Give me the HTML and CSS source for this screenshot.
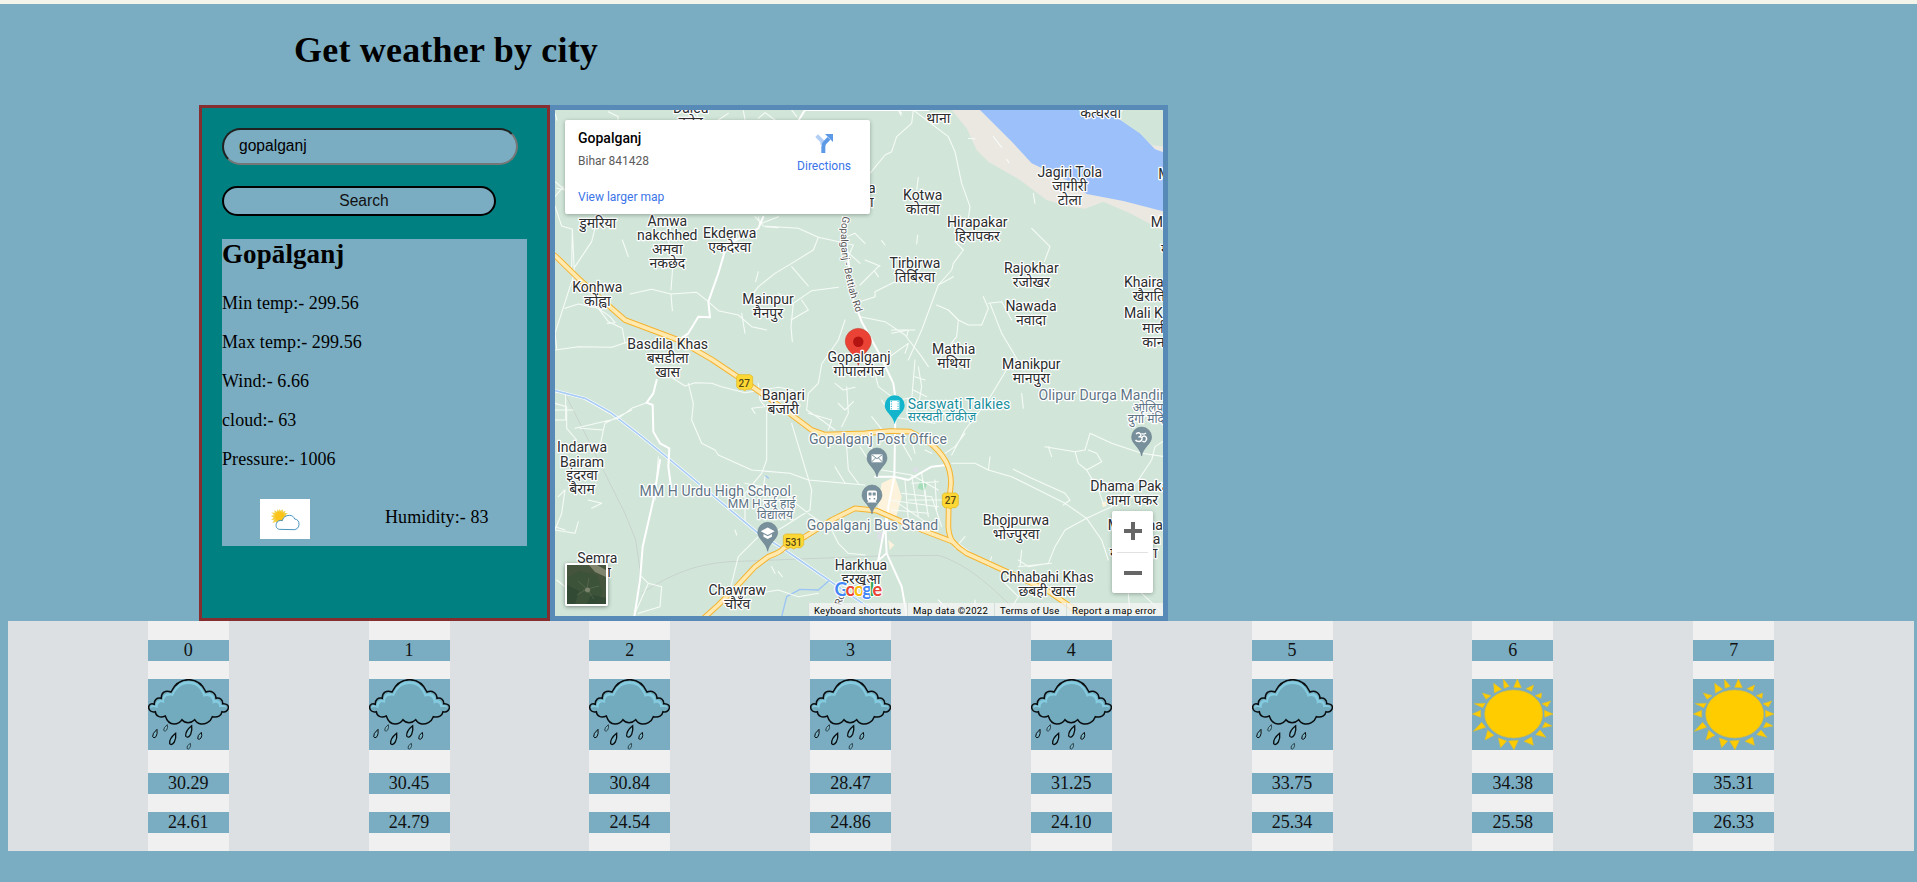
FILE: index.html
```html
<!DOCTYPE html>
<html lang="en">
<head>
<meta charset="utf-8">
<title>Get weather by city</title>
<link rel="stylesheet" href="styles.css">
</head>
<body>
<svg class="defs" width="0" height="0" aria-hidden="true">
  <symbol id="rain" viewBox="444 207 243 213" preserveAspectRatio="none">
    <path d="M513 246C526 218 545 209 566 209S606 219 618 246C633 240 648 248 648 265C659 262 669 269 668 281C681 280 688 288 684 297C681 305 674 307 666 305C664 317 654 324 637 320C631 337 615 343 603 342C595 341 589 338 584 329C572 341 556 341 546 329C541 337 532 342 522 342C508 342 501 334 496 318C480 325 467 318 466 305C454 308 446 301 446 292C446 282 455 279 463 283C462 269 472 261 484 265C483 248 496 239 513 246Z" fill="#72abbd" stroke="#0a0d0f" stroke-width="4.500"/>
    <path d="M451 294C450 286 457 283 466 289C465 276 475 266 488 271C487 253 500 246 516 251C530 222 548 214 566 214S602 224 615 252C630 246 643 253 644 270C655 268 663 275 663 285C671 284 679 287 679 293C670 290 665 292 658 292C658 278 648 275 638 281C640 262 625 253 611 260C602 232 586 222 566 222S529 233 519 258C500 253 490 262 493 279C479 273 472 280 473 294C463 290 456 290 451 294Z" fill="#85cbe0"/>
    <g fill="#7ab4c6" stroke="#0a0d0f" stroke-width="3">
      <path d="M471 358Q456 371 458 380Q461 387 468 380Q473 372 471 358Z"/>
      <path d="M502 344Q490 353 491 361Q495 367 500 360Q504 354 502 344Z" stroke-width="2"/>
      <path d="M527 370Q507 386 509 401Q514 408 523 396Q529 385 527 370Z" stroke-width="4"/>
      <path d="M575 347Q556 362 557 378Q563 387 572 373Q577 362 575 347Z" stroke-width="4"/>
      <path d="M604 367Q592 376 593 386Q597 391 603 384Q607 377 604 367Z"/>
      <path d="M571 400Q559 407 561 415Q564 421 570 413Q573 407 571 400Z" stroke-width="2"/>
    </g>
  </symbol>
  <symbol id="sun" viewBox="96 207 243 213" preserveAspectRatio="none">
    <g fill="#fc0" stroke="#d8bd35" stroke-width="2">
      <ellipse cx="221" cy="312" rx="87" ry="72"/>
      <path d="M161 220L185 238L163 249ZM190 208L208 229L192 235ZM232 207L244 233L221 232ZM281 225L275 244L258 236ZM305 249L303 265L285 257ZM332 273L322 291L306 281ZM313 301L339 312L314 322ZM315 337L336 348L307 353ZM300 360L318 382L287 374ZM275 381L280 406L252 394ZM206 393L235 391L222 419ZM175 384L200 393L182 413ZM143 361L162 376L135 390ZM125 337L137 352L100 364ZM122 301V322L97 312ZM103 281L136 280L128 293ZM127 249L153 257L138 268Z"/>
    </g>
  </symbol>
</svg>

<h1 class="title">Get weather by city</h1>

<main class="panels">
  <section class="lookup">
    <input class="city-input" type="text" value="gopalganj">
    <button class="search-btn">Search</button>
    <div class="report">
      <h2>Gopālganj</h2>
      <p>Min temp:- 299.56</p>
      <p>Max temp:- 299.56</p>
      <p>Wind:- 6.66</p>
      <p>cloud:- 63</p>
      <p>Pressure:- 1006</p>
      <div class="sky">
        <svg class="sky-icon" viewBox="210 537 150 120">
          <path d="M269 566L272 573L278 568L279 575L287 572L284 579L294 580L287 585L293 592L287 598L284 604L262 612L258 605L247 609L253 599L243 600L251 593L243 588L252 585L244 577L254 579L253 571L261 575L262 568L267 573Z" fill="#f3cf45"/>
          <circle cx="269" cy="589" r="14" fill="#fcc419"/>
          <path d="M268 628C259 626 257 619 259 611C261 603 269 600 277 602C279 591 289 586 298 586S311 590 314 597C323 598 328 605 327 614C326 624 320 628 313 629Z" fill="#fff" stroke="#2c83b5" stroke-width="2.600"/>
        </svg>
        <span class="humidity">Humidity:- 83</span>
      </div>
    </div>
  </section>

  <section class="map">
    <svg class="map-canvas" viewBox="555 110 608 506">
      <rect x="555" y="110" width="608" height="506" fill="#d1e6d9"/>
      <g transform="translate(545 100) scale(.333333)" fill="none" stroke-linejoin="round" stroke-linecap="round">
        <path d="M1220 30L1265 85L1295 150L1330 185L1425 240L1505 300L1565 318L1620 326L1675 305L1755 340L1860 395V140L1815 128L1700 30Z" fill="#ebe8e2"/>
        <path d="M1305 30L1405 130L1460 190L1565 240L1625 282L1735 303L1860 335V158L1830 148L1785 100L1705 45L1680 30Z" fill="#9cc0fa"/>
        <path d="M1680 28L1705 45L1785 100L1822 136L1860 140V28Z" fill="#d1e6d9"/>
        <path d="M1010 1150L1050 1130L1070 1190L1060 1230L1050 1260L995 1240ZM1030 1320L1048 1335L1034 1350ZM1670 1208L1682 1204L1684 1218L1674 1222Z" fill="#fdf3dc"/>
        <path d="M1125 1142L1146 1151L1138 1172L1118 1165Z" fill="#a5dcb9"/>
        <path d="M1105 1102h14v14h-14zM995 1295l20 2l3 20l-20 2z" fill="#dcdfe5"/>
        <g stroke="#c8d3ce" stroke-width="3">
          <path d="M62 885L100 960L180 1120L240 1240L272 1320L285 1410L280 1480"/>
          <path d="M290 1480C380 1420 460 1390 560 1385L1000 1368L1180 1366C1260 1390 1330 1450 1410 1530"/>
        </g>
        <path d="M30 872L120 895L200 940L290 1010L400 1100L640 1300L720 1350L850 1440L960 1515L1020 1550" stroke="#fff" stroke-width="9"/>
        <path d="M30 872L120 895L200 940L290 1010L400 1100L640 1300L720 1350L850 1440L960 1515L1020 1550" stroke="#a9cdf5" stroke-width="5"/>
        <path d="M710 1550L725 1490L765 1468L820 1470L850 1444M662 1128L670 1134" stroke="#9cc4f5" stroke-width="4"/>

        <g stroke="#f7fbf8" stroke-width="3.200">
          <path d="M190 35L220 50L215 90M450 32L470 75M520 60L550 40M595 32L600 58M640 55L660 38L690 60M740 30L755 50M30 40L36 60M30 245L60 270L35 265M30 290L55 260"/>
          <path d="M30 318L50 378L82 388L80 500M82 388L88 520M90 500L140 425L150 385M88 520L30 700L35 745"/>
          <path d="M355 350L378 375L370 420L384 490L378 570M232 420L250 470M255 582L320 568L378 582L382 632M378 582L455 577L490 605"/>
          <path d="M60 625L100 612L160 625L195 650L210 668L186 670M160 625L190 665M190 665L232 685L240 730M30 750L100 740L200 742L250 725"/>
          <path d="M630 350L655 378L760 385L820 412L805 450L740 490L690 520L640 560L610 600M660 380L700 383M640 350L645 375M700 350L650 370M740 500L790 558M640 515L632 545"/>
          <path d="M490 605L520 632L580 645L620 680L665 690M745 610L738 680L742 725M738 660L790 630L770 600M700 580L745 610L800 572L880 562M590 640L600 700"/>
          <path d="M820 412L925 435L910 470M905 410L930 400L960 430M880 430L945 490M1105 30L1100 70L1055 110L1040 155L1020 165L975 220M1070 40L1060 30L1068 46"/>
          <path d="M1105 30L1210 110L1230 155L1250 250L1275 320L1270 355L1230 425L1255 450L1240 470L1225 490L1220 510L1180 555L1130 690L1090 780"/>
          <path d="M1180 555L1225 530M1175 615L1210 630L1240 660L1270 675L1310 675L1330 625L1315 590M1240 660L1235 710L1180 780M1330 610L1370 605L1400 660M1335 610L1370 700L1400 750L1420 785"/>
          <path d="M1460 385L1515 440L1498 485M1120 232L1115 270M1010 422L1020 435M1345 110L1370 142M1465 280L1470 310M1118 405L1115 432M1385 178L1392 188M1270 115L1290 117"/>
          <path d="M945 555L1000 500L1005 498L960 480M945 605L990 590L990 575L1050 545L1100 535M990 515L1000 530M945 650L1020 665L1080 705L1130 770L1150 800M1040 690L1110 690M1040 700L1090 690L1085 710M1020 780L1090 730L1080 760"/>
          <path d="M30 910L65 920L65 985L95 1020M30 930H85M30 960H65M62 885V960M90 985L220 955L260 925L305 908M105 985L175 990L165 1040M175 990L180 970L260 930"/>
          <path d="M330 800L420 858L450 848L500 850L530 860L600 878L700 862L745 870M430 850L445 910L440 960L470 1030L510 1050L520 1065L620 1110L735 1120L790 1140L960 1155"/>
          <path d="M640 850L645 900L660 920L620 925L630 940M665 930V1080L650 1120L600 1180L600 1260M740 970L770 1070L800 1170L795 1230L700 1290M660 1130L655 1160L735 1190M600 1150L700 1170L790 1240L860 1290L880 1330L910 1360L960 1365"/>
          <path d="M900 660L880 720L830 792L820 850L790 880L785 930L830 960L870 990M790 940L860 960L850 990M905 860L910 940L890 980M980 780L1000 860L1040 890M905 1040L910 1110L940 1150M870 1100L900 1150M880 910L900 930L925 905M870 850L895 870L930 862"/>
          <path d="M40 1190L60 1170L50 1240L30 1290L90 1300L100 1265M30 1280L60 1290M130 1200L170 1210L140 1225M340 1070L330 1200M35 1440L60 1460L80 1500M270 1540L310 1450L350 1460L345 1520L280 1540M310 1450L290 1430"/>
          <path d="M540 1510L560 1450L580 1370L620 1330L640 1310M640 1480L700 1470L760 1490L820 1480M680 1400L690 1420M700 1415L712 1430M570 1290L575 1305"/>
          <path d="M1010 900L1040 950L1100 960L1170 970M1120 800L1130 860L1120 920M1220 1065L1260 990L1330 900L1390 800L1420 785M1430 880L1435 925M1200 1060L1230 1040L1260 1000M1110 780L1100 900L1120 960M1110 830L1140 840M1105 870L1145 890M1060 900L1090 895L1085 940"/>
          <path d="M1220 1090L1290 1090L1330 1110L1400 1130L1440 1150L1560 1210L1625 1255L1700 1220L1780 1140L1820 1080L1830 1040L1860 1020M1330 1110L1335 1070M1405 1108L1460 1135L1560 1180L1575 1200L1555 1215"/>
          <path d="M1500 1040L1590 1055L1620 1050L1635 1000L1700 1030L1790 1060L1860 1070M1590 1055L1600 1090L1625 1110L1670 1085L1655 1060L1630 1050M1625 1110L1660 1170L1675 1210M1520 1070L1510 1040"/>
          <path d="M1625 1255L1560 1290L1530 1340L1510 1390L1450 1400L1420 1380M1625 1255L1670 1320L1690 1380M1420 1400L1520 1390M1430 1350L1425 1400M1390 1540L1420 1490L1380 1450M1790 1480L1860 1545M1750 1480L1755 1540"/>
          <path d="M1010 1110L1100 1125L1180 1170M1070 1180L1160 1190M1030 1200L1180 1220M1100 1125L1120 1250M1130 1120L1150 1250M1160 1190L1190 1280M1040 1230L1150 1240M1080 1140L1090 1260M970 1010L1000 1110M945 1040L970 1080M980 950L1020 1000M1060 1010L1100 1080"/>
          <path d="M1090 1200L1200 1200M1100 1150L1180 1145M1140 1170L1145 1220M1170 1140L1175 1230M1060 1210L1140 1265M950 1010L1000 1070L1000 1120M1240 1330L1280 1360M1230 1345L1260 1310M1340 1370L1330 1400M1180 1500L1210 1530M1290 1500V1540M1095 1000L1110 1060M1140 1050L1160 1060"/>
        </g>
        <g stroke="#fff" stroke-width="6">
          <path d="M655 350L640 385L545 435L520 520L490 605L495 652L460 650L430 700L395 725M1150 30L780 30L760 62M335 840L325 880L305 908L323 915L325 995L345 1030L373 1045L370 1100L378 1160M345 1080L325 1200L293 1340L285 1440L268 1550"/>
          <path d="M893 350L910 480L925 600L950 665L1005 765L1045 850L1052 900L1050 1000L1048 1130L1030 1220L1022 1300L1025 1360L1070 1460L1085 1545M1025 1360L990 1390M1048 1130L1090 1140L1160 1100L1205 1095M990 1130L1048 1130M1025 1250L1000 1380"/>
        </g>
        <g stroke="#f5b32e" stroke-width="17">
          <path d="M30 467L100 535L200 625L240 660L400 720L500 778L600 845L700 915L800 990L840 1004L960 1000L1035 993L1095 995L1145 1020C1200 1065 1218 1100 1218 1150L1211 1220L1210 1280Q1212 1310 1223 1325Q1240 1345 1265 1360L1385 1415L1505 1470L1605 1540L1625 1560"/>
          <path d="M470 1560L520 1515L570 1465L630 1400L670 1370Q710 1355 715 1345L780 1310L860 1260L930 1225L995 1232L1105 1280L1223 1325"/>
        </g>
        <g stroke="#ffe9ae" stroke-width="11">
          <path d="M30 467L100 535L200 625L240 660L400 720L500 778L600 845L700 915L800 990L840 1004L960 1000L1035 993L1095 995L1145 1020C1200 1065 1218 1100 1218 1150L1211 1220L1210 1280Q1212 1310 1223 1325Q1240 1345 1265 1360L1385 1415L1505 1470L1605 1540L1625 1560"/>
          <path d="M470 1560L520 1515L570 1465L630 1400L670 1370Q710 1355 715 1345L780 1310L860 1260L930 1225L995 1232L1105 1280L1223 1325"/>
        </g>
        <g fill="#fdd835" stroke="#e3b51c" stroke-width="2">
          <path d="M582 824h34l7 6v30l-7 8h-10l-7 4l-7-4h-10l-7-8v-30z"/>
          <path d="M1199 1179h34l7 6v30l-7 8h-10l-7 4l-7-4h-10l-7-8v-30z"/>
          <path d="M723 1302h45l8 6v26l-8 9h-14l-8 4l-8-4h-15l-8-9v-26z"/>
        </g>
      </g>
      <g class="shield">
        <text x="744.300" y="386.500">27</text><text x="950.500" y="504.400">27</text><text x="793.500" y="545.600">531</text>
      </g>

      <!-- points of interest -->
      <g fill="#78909c" stroke="#607987" stroke-width=".5">
        <path id="pin" d="M767.700 522.300a10 10 0 0 1 10 10c0 7-8.500 10-10 19c-1.500-9-10-12-10-19a10 10 0 0 1 10-10z"/>
        <use href="#pin" x="109.300" y="-74.300"/>
        <use href="#pin" x="104.300" y="-37.300"/>
        <use href="#pin" x="373.900" y="-95.300"/>
      </g>
      <path d="M894.700 395.300a10 10 0 0 1 10 10c0 7-8.500 10-10 19c-1.500-9-10-12-10-19a10 10 0 0 1 10-10z" fill="#12b5cb"/>
      <path d="M767.700 527.500l7 3.700l-7 3.700l-7-3.700zM763.500 534l4.200 2.200l4.200-2.200v2.700l-4.200 2.300l-4.200-2.300z" fill="#fff"/>
      <path d="M871.500 454.300h11v8h-11z" fill="#fff"/><path d="M871.500 454.500l5.500 4.200l5.500-4.200M871.500 462l4-4M882.500 462l-4-4" stroke="#78909c" fill="none"/>
      <path d="M869 490.500h6q2 0 2 2v6q0 2-1.500 2.500l1.500 1.500h-10l1.500-1.500q-1.500-.5-1.500-2.500v-6q0-2 2-2z" fill="#fff"/><path d="M868.500 492.500h3v3h-3zM872.700 492.500h3v3h-3zM869 498h1.500v1.500h-1.500zM873.700 498h1.500v1.500h-1.500z" fill="#78909c"/>
      <path d="M890 400.500h9.400v9.500h-9.400z" fill="#fff"/><path d="M891.300 401v9M898.100 401v9" stroke="#12b5cb" stroke-dasharray="1.200 1.200"/>
      <path d="M1136 434q3-2.500 4.500 0t-2 3q4-.5 3.500 2t-3 2.500t-3.500-1.500M1141.500 438q2-3 4-1.500t.5 4t-3.500 .5M1141.500 433.500q2 1.500 4.500-.5" fill="none" stroke="#fff" stroke-width="1.400"/>
      <path d="M858.300 328.400a13 13 0 0 1 13 13c0 8.500-10.500 13-13 24c-2.500-11-13-15.500-13-24a13 13 0 0 1 13-13z" fill="#ea4335" stroke="#c5392d" stroke-width=".6"/>
      <circle cx="858.300" cy="341.700" r="5.200" fill="#b31412"/>

      <g class="place">
        <text x="690.700" y="113">Daleu</text><text x="690.700" y="127">दलेउ</text>
        <text x="938.300" y="122.700">थाना</text><text x="1100.700" y="117.500">कत्घरवा</text>
        <text x="597.700" y="228">डुमरिया</text>
        <text x="667.300" y="225.700">Amwa</text><text x="667.300" y="239.700">nakchhed</text><text x="667.300" y="253.500">अमवा</text><text x="667.300" y="267.700">नकछेद</text>
        <text x="729.700" y="237.700">Ekderwa</text><text x="729.700" y="251.700">एकदेरवा</text>
        <text x="597.300" y="291.700">Konhwa</text><text x="597.300" y="305.700">कोंह्वा</text>
        <text x="768" y="304">Mainpur</text><text x="768" y="318">मैनपुर</text>
        <text x="667.700" y="349">Basdila Khas</text><text x="667.700" y="363">बसडीला</text><text x="667.700" y="377">खास</text>
        <text x="871.700" y="193">a</text><text x="868" y="207">वा</text>
        <text x="922.700" y="200">Kotwa</text><text x="922.700" y="213.700">कोतवा</text>
        <text x="977.300" y="227">Hirapakar</text><text x="977.300" y="241">हिरापकर</text>
        <text x="915" y="268">Tirbirwa</text><text x="915" y="282">तिर्बिरवा</text>
        <text x="1031.300" y="273">Rajokhar</text><text x="1031.300" y="287">रजोखर</text>
        <text x="1031" y="311.300">Nawada</text><text x="1031" y="325.300">नवादा</text>
        <text x="953.700" y="354">Mathia</text><text x="953.700" y="368">मथिया</text>
        <text x="1069.700" y="176.700">Jagiri Tola</text><text x="1069.700" y="190.700">जागीरी</text><text x="1069.700" y="204.700">टोला</text>
        <text x="859" y="361.700">Gopalganj</text><text x="859" y="375.700">गोपालगंज</text>
        <text x="783.300" y="399.700">Banjari</text><text x="783.300" y="413.500">बंजारी</text>
        <text x="1031.300" y="369.300">Manikpur</text><text x="1031.300" y="383.300">मानपुरा</text>
        <text x="582" y="452.300">Indarwa</text><text x="582" y="466.700">Bairam</text><text x="582" y="480.300">इंदरवा</text><text x="582" y="494">बैराम</text>
        <text x="597.300" y="562.700">Semra</text><text x="597.300" y="576.700">सेमरा</text>
        <text x="737.300" y="595.300">Chawraw</text><text x="737.300" y="609">चौरँव</text>
        <text x="861" y="570">Harkhua</text><text x="861" y="583.700">हरखुआ</text>
        <text x="1132" y="505">धामा पकर</text>
        <text x="1016" y="525.300">Bhojpurwa</text><text x="1016" y="539.300">भोज्पुरवा</text>
        <text x="1047" y="582.300">Chhabahi Khas</text><text x="1047" y="595.700">छबही खास</text>
      </g>
      <g class="place from-left">
        <text x="1158.300" y="178.700">M</text><text x="1150.700" y="227">Ma</text><text x="1161" y="254">म</text>
        <text x="1124" y="287">Khaira</text><text x="1132.700" y="301">खैराति</text>
        <text x="1124" y="318.300">Mali Ka</text><text x="1142.300" y="332.500">माली</text><text x="1142.300" y="346.700">कान</text>
        <text x="1090.300" y="491.300">Dhama Pakar</text>
        <text x="1107.700" y="530">M</text><text x="1147.500" y="530">na</text><text x="1152.700" y="544">a</text><text x="1110" y="558">म</text><text x="1146" y="558">ना</text>
      </g>
      <g class="place poi">
        <text x="878" y="444">Gopalganj Post Office</text>
        <text x="872.500" y="529.700">Gopalganj Bus Stand</text>
        <text x="715.300" y="496">MM H Urdu High School</text>
        <text class="small" x="761.700" y="507.500">MM H उर्दू हाई</text><text class="small" x="775" y="518.500">विद्यालय</text>
      </g>
      <g class="place poi from-left">
        <text x="1038.500" y="400.300">Olipur Durga Mandir</text>
        <text class="small" x="1132.700" y="411.500">ओलिपुर</text><text class="small" x="1127.700" y="422.700">दुर्गा मंदिर</text>
        <text class="cinema" x="907.700" y="409">Sarswati Talkies</text><text class="cinema small" x="907.700" y="421">सरस्वती टॉकीज़</text>
      </g>
      <path id="road-name" d="M843 216Q838 240 845 272Q850 298 857 315" fill="none"/>
      <text class="road"><textPath href="#road-name">Gopalganj - Bettiah Rd</textPath></text>
      <text class="road" transform="translate(841 606) rotate(-72)">Rd</text>
      <text class="brand" x="834.500" y="595.500" textLength="47.500"><tspan fill="#4285f4">G</tspan><tspan fill="#ea4335">o</tspan><tspan fill="#fbbc05">o</tspan><tspan fill="#4285f4">g</tspan><tspan fill="#34a853">l</tspan><tspan fill="#ea4335">e</tspan></text>
    </svg>

    <div class="place-card">
      <div class="place-info">
        <strong>Gopalganj</strong>
        <span class="address">Bihar 841428</span>
        <a>View larger map</a>
      </div>
      <div class="directions">
        <svg width="18" height="19" viewBox="0 0 54 57"><path d="M5 5L22 22V32" stroke="#b3cff5" stroke-width="12" fill="none"/><path d="M25 57V38Q25 29 32 23L42 13" stroke="#5c9ae8" stroke-width="12" fill="none"/><path d="M30 0H54V24Z" fill="#5c9ae8"/></svg>
        <a>Directions</a>
      </div>
    </div>

    <div class="satellite">
      <svg viewBox="0 0 39 39" width="39" height="39"><rect width="39" height="39" fill="#3c5239"/><path d="M0 0H39V39H28L36 28L30 10L12 6L0 13Z" fill="#48563f" opacity=".7"/><path d="M0 20L12 26L8 39H0ZM24 30L39 33V39H20Z" fill="#2e4630" opacity=".7"/><path d="M22 0L28 7L39 12V5L30 0Z" fill="#82856e"/><path d="M20 24L11 16M20 24L22 13M20 24L32 21M20 24L10 30M20 24L27 34M16 25H24" stroke="#78806a" opacity=".4"/><circle cx="20.500" cy="25" r="2.500" fill="#9a9b85" opacity=".6"/></svg>
    </div>

    <div class="zoom-control">
      <svg width="18" height="18" viewBox="0 0 18 18"><path d="M9 0V18M0 9H18" stroke="#666" stroke-width="4"/></svg>
      <hr>
      <svg width="18" height="18" viewBox="0 0 18 18"><path d="M0 9H18" stroke="#666" stroke-width="4"/></svg>
    </div>

    <div class="map-credits"><span class="c1">Keyboard shortcuts</span><span class="c2">Map data ©2022</span><span class="c3">Terms of Use</span><span class="c4">Report a map error</span></div>
  </section>
</main>

<section class="forecast">
  <div class="day"><p>0</p><svg><use href="#rain"/></svg><p>30.29</p><p>24.61</p></div>
  <div class="day"><p>1</p><svg><use href="#rain"/></svg><p>30.45</p><p>24.79</p></div>
  <div class="day"><p>2</p><svg><use href="#rain"/></svg><p>30.84</p><p>24.54</p></div>
  <div class="day"><p>3</p><svg><use href="#rain"/></svg><p>28.47</p><p>24.86</p></div>
  <div class="day"><p>4</p><svg><use href="#rain"/></svg><p>31.25</p><p>24.10</p></div>
  <div class="day"><p>5</p><svg><use href="#rain"/></svg><p>33.75</p><p>25.34</p></div>
  <div class="day"><p>6</p><svg><use href="#sun"/></svg><p>34.38</p><p>25.58</p></div>
  <div class="day"><p>7</p><svg><use href="#sun"/></svg><p>35.31</p><p>26.33</p></div>
</section>
</body>
</html>
```
FILE: styles.css
```css
* { box-sizing: border-box; }
html { background: #7aadc2; }
body {
  margin: 0;
  border-top: 4px solid #f3f5ea;
  padding: 0 3px 0 8px;
  height: 882px;
  overflow: hidden;
  background: #7aadc2;
  color: #000;
  font: 18px/21px "Liberation Serif", serif;
}
.defs { display: block; height: 0; }
.title {
  margin: 0;
  padding: 26px 0 34px 286px;
  font-size: 36px;
  line-height: 41px;
  letter-spacing: .2px;
}
.panels { display: flex; margin-left: 191px; height: 516px; }

.lookup {
  width: 351px;
  border: 3px solid #862d2f;
  padding: 20px;
  background: #008080;
  display: flex;
  flex-direction: column;
  align-items: flex-start;
}
.city-input {
  width: 296px;
  height: 37px;
  padding: 0 15px 2px;
  border: 2px inset #767676;
  border-radius: 20px;
  background: #7aadc2;
  color: #000;
  font: 15.6px "Liberation Sans", sans-serif;
}
.search-btn {
  width: 274px;
  height: 30px;
  margin: 21px 0 23px;
  padding: 0 0 0 10px;
  border: 2px solid #000;
  border-radius: 20px;
  background: #7aadc2;
  color: #111;
  font: 15.6px "Liberation Sans", sans-serif;
}
.report { width: 305px; height: 307px; background: #7aadc2; }
.report h2 { margin: 0 0 23px; font-size: 27px; line-height: 31px; letter-spacing: .1px; }
.report p { margin: 0 0 18px; letter-spacing: .08px; }
.sky { display: flex; align-items: center; padding-left: 38px; height: 40px; }
.report p + .sky { margin-top: 29px; }
.report p:last-of-type { margin-bottom: 0; height: 21px; }
.sky-icon { width: 50px; height: 40px; background: #fff; }
.humidity { margin-left: 75px; padding-bottom: 4px; letter-spacing: .08px; }

.map {
  position: relative;
  width: 618px;
  border: 5px solid #588ab8;
  font-family: Roboto, "Noto Sans", sans-serif;
}
.map-canvas { display: block; width: 608px; height: 506px; }
.map text { font-family: Roboto, "Noto Sans", sans-serif; paint-order: stroke; stroke: #fff; stroke-linejoin: round; }
.place text { font-size: 14px; fill: #2a2c2e; stroke-width: 2.5px; text-anchor: middle; }
.from-left text { text-anchor: start; }
.poi text { fill: #5f7586; letter-spacing: .1px; }
.poi .cinema { fill: #178f9c; }
.place .small { font-size: 12px; }
.shield text { font-size: 10px; font-weight: 500; fill: #594a13; stroke: none; text-anchor: middle; }
.map .road { font-size: 10px; fill: #555; stroke-width: 2px; }
.map .brand { font-family: Lato, sans-serif; font-size: 18px; font-weight: 700; stroke-width: 2px; }

.place-card {
  position: absolute;
  left: 10px;
  top: 10px;
  width: 305px;
  height: 94px;
  padding: 10px 19px 0 13px;
  display: flex;
  justify-content: space-between;
  background: #fff;
  border-radius: 2px;
  box-shadow: 0 1px 4px rgba(0, 0, 0, .3);
  font-size: 12px;
  line-height: 16px;
}
.place-info { display: flex; flex-direction: column; }
.place-info strong { font-size: 14px; font-weight: 500; }
.address { margin: 7px 0 20px; color: #5b5b5b; }
.place-card a { color: #3a74e8; }
.directions { display: flex; flex-direction: column; align-items: center; gap: 5px; padding-top: 4px; }

.satellite {
  position: absolute;
  left: 10px;
  top: 453px;
  width: 43px;
  height: 43px;
  border: 2px solid #fff;
  border-radius: 2px;
  box-shadow: 0 1px 4px rgba(0, 0, 0, .4);
}
.satellite svg { display: block; }
.zoom-control {
  position: absolute;
  left: 557px;
  top: 401px;
  width: 41px;
  height: 82px;
  display: flex;
  flex-direction: column;
  justify-content: space-between;
  align-items: center;
  padding: 11px 0;
  background: #fff;
  border-radius: 2px;
  box-shadow: 0 1px 4px rgba(0, 0, 0, .3);
}
.zoom-control hr { width: 31px; height: 1px; margin: 0; border: 0; background: #e2e2e2; }
.map-credits {
  position: absolute;
  right: 0;
  bottom: 0;
  display: flex;
  height: 13px;
  font-size: 9.5px;
  line-height: 15px;
  color: #000;
  white-space: nowrap;
}
.map-credits span { padding-left: 5px; background: rgba(245, 245, 245, .75); border-left: 1px solid #d5dfd9; letter-spacing: .28px; }
.c1 { width: 99px; }
.c2 { width: 87px; }
.c3 { width: 72px; }
.c4 { width: 97px; }

.forecast {
  display: flex;
  justify-content: space-evenly;
  height: 230px;
  background: #dce0e3;
}
.day {
  width: 81px;
  padding-top: 19px;
  background: #f0f0f0;
  text-align: center;
  color: #111;
}
.day p { margin: 0 0 18px; background: #7aadc2; }
.day svg { display: block; width: 81px; height: 71px; margin-bottom: 23px; background: #7aadc2; }
```
